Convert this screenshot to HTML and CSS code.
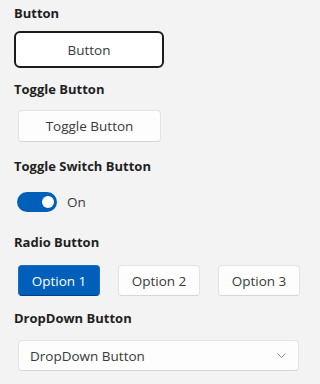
FILE: index.html
```html
<!DOCTYPE html>
<html>
<head>
<meta charset="utf-8">
<link rel="stylesheet" href="styles.css">
</head>
<body>
<div class="page">
  <div class="h h1">Button</div>
  <button class="btn focus">Button</button>

  <div class="h h2">Toggle Button</div>
  <button class="btn toggle">Toggle Button</button>

  <div class="h h3">Toggle Switch Button</div>
  <div class="switch-row">
    <span class="switch"><span class="knob"></span></span>
    <span class="switch-label">On</span>
  </div>

  <div class="h h4">Radio Button</div>
  <div class="radios">
    <button class="btn radio selected">Option 1</button>
    <button class="btn radio">Option 2</button>
    <button class="btn radio">Option 3</button>
  </div>

  <div class="h h5">DropDown Button</div>
  <button class="btn dropdown">
    <span>DropDown Button</span>
    <svg class="chev" width="9" height="5" viewBox="0 0 9 5"><path d="M0.5 0.5 L4.5 4.5 L8.5 0.5" fill="none" stroke="#8a8a8a" stroke-width="1"/></svg>
  </button>
</div>
</body>
</html>
```
FILE: styles.css
```css
html, body {
  margin: 0;
  padding: 0;
  background: #f3f3f3;
}
body {
  font-family: "Open Sans", "Noto Sans", sans-serif;
  color: #1b1b1b;
}
.page {
  display: flex;
  flex-direction: column;
  align-items: flex-start;
  padding: 3px 0 0 14px;
}
.h {
  font-size: 13px;
  font-weight: 700;
  line-height: 20px;
  color: #1f1f1f;
}
.h2 { margin-top: 11px; }
.h3 { margin-top: 14px; }
.h4 { margin-top: 20px; }
.h5 { margin-top: 12px; }

.btn {
  font-family: "Open Sans", "Noto Sans", sans-serif;
  font-size: 13.5px;
  color: #3a3a3a;
  background: #fdfdfd;
  border: 1px solid #e3e3e3;
  border-bottom-color: #d6d6d6;
  border-radius: 4px;
  padding: 0;
  box-sizing: border-box;
  display: flex;
  align-items: center;
  justify-content: center;
}
.focus {
  margin-top: 8px;
  width: 150px;
  height: 37px;
  border: 2px solid #1c1c1c;
  border-radius: 6px;
  background: #ffffff;
  box-shadow: inset 0 0 0 1px #ffffff;
}
.toggle {
  margin: 11px 0 0 4px;
  width: 143px;
  height: 32px;
}
.switch-row {
  margin: 16px 0 0 3px;
  display: flex;
  align-items: center;
  height: 20px;
}
.switch {
  width: 40px;
  height: 20px;
  border-radius: 10px;
  background: #005fb8;
  display: flex;
  align-items: center;
  justify-content: flex-end;
  padding-right: 3px;
  box-sizing: border-box;
}
.knob {
  width: 12px;
  height: 12px;
  border-radius: 50%;
  background: #ffffff;
}
.switch-label {
  margin-left: 10px;
  font-size: 13.5px;
  color: #3a3a3a;
}
.radios {
  margin: 13px 0 0 4px;
  display: flex;
  gap: 18px;
}
.radio {
  width: 82px;
  height: 31px;
}
.radio.selected {
  background: #005fb8;
  border-color: #1a6cc0;
  border-bottom-color: #003e80;
  color: #ffffff;
}
.dropdown {
  margin: 12px 0 0 4px;
  width: 281px;
  height: 31px;
  justify-content: space-between;
  padding: 0 12px 0 11px;
}
.chev {
  display: block;
}
```
